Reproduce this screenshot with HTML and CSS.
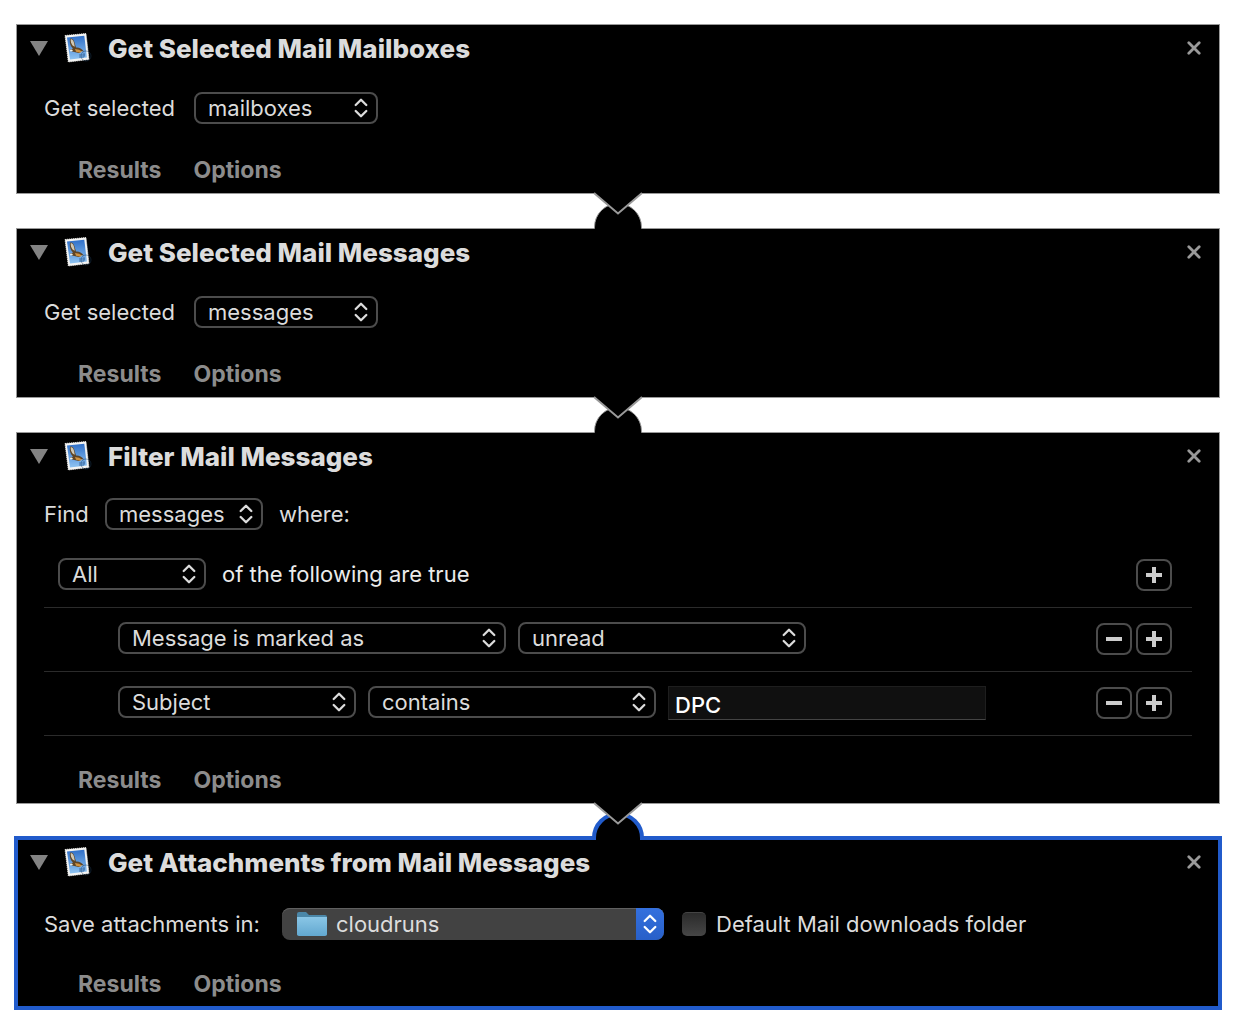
FILE: index.html
```html
<!DOCTYPE html>
<html lang="en">
<head>
<meta charset="utf-8">
<title>Mail workflow</title>
<link rel="stylesheet" href="styles.css">
</head>
<body>
<svg class="sprite" aria-hidden="true">
  <defs>
    <linearGradient id="sky" x1="0" y1="0" x2="0" y2="1">
      <stop offset="0" stop-color="#2f6fc8"/><stop offset="1" stop-color="#8fc4f2"/>
    </linearGradient>
    <linearGradient id="folder-front" x1="0" y1="0" x2="0" y2="1">
      <stop offset="0" stop-color="#8ac6e6"/><stop offset="1" stop-color="#62a8d0"/>
    </linearGradient>
  </defs>
  <symbol id="mail" viewBox="0 0 30 32">
    <path d="M2 3.500 23 1.500 26 27.500 5.300 30Z" fill="#f4f4f2" stroke="#f4f4f2" stroke-width=".8" stroke-dasharray="1.200 .8"/>
    <path d="M4 5.500 21.300 3.700 23.900 25.500 7 27.600Z" fill="url(#sky)"/>
    <path d="M7.300 6.500c2.200-.5 3.700 1.500 4.200 4l1.500 5c2.500-.5 5.500 1 8 4l-3-.6c-.5 2-2.500 2.600-4.500 1.600l-4.500-1-2-1.500 3-1.500C7.500 14 6 10 7.300 6.500Z" fill="#5f4526"/>
    <path d="M7.800 7c2 .2 2.700 2 3.200 3.800l.8 4-2-1C8.300 12 7.300 9.500 7.800 7Z" fill="#d0c8b4"/>
    <path d="M12 17l4 .8 3 1.700-2 1.200-4-.9Z" fill="#cf9240"/>
    <path d="M6.800 18l2.200-.5 1 1.500-2.500.6Z" fill="#f1eee4"/>
    <circle cx="23" cy="24" r="5" fill="none" stroke="#1d3b5c" stroke-width="1" opacity=".45"/>
    <path d="M16 23h6M16 25h5M21 21v4" stroke="#26558c" stroke-width="1" opacity=".7"/>
  </symbol>
  <symbol id="triangle" viewBox="0 0 18 15"><path d="M0 0H18L9 15Z" fill="#838383"/></symbol>
  <symbol id="cross" viewBox="0 0 14 14"><path d="M1.800 1.800 12.200 12.200M12.200 1.800 1.800 12.200" stroke="#999" stroke-width="2.800" stroke-linecap="round"/></symbol>
  <symbol id="chevrons" viewBox="0 0 14 20"><path d="M1.700 7 7 1.800 12.300 7M1.700 13 7 18.200 12.300 13" fill="none" stroke="currentColor" stroke-width="2.300" stroke-linecap="round" stroke-linejoin="round"/></symbol>
  <symbol id="plus" viewBox="0 0 16 16"><path d="M8 0V16M0 8H16" stroke="#ccc" stroke-width="4"/></symbol>
  <symbol id="minus" viewBox="0 0 16 16"><path d="M0 8H16" stroke="#ccc" stroke-width="4"/></symbol>
  <symbol id="folder" viewBox="0 0 32 26">
    <path d="M1 3Q1 1 3 1H10L13 4H29Q31 4 31 6V24H1Z" fill="#4b87a8"/>
    <path d="M1 6H31V23Q31 25 29 25H3Q1 25 1 23Z" fill="url(#folder-front)"/>
  </symbol>
  <symbol id="link" viewBox="0 0 60 40">
    <path d="M6.500 40V36A23.500 23.500 0 0 1 53.500 36V40Z"/>
    <path d="M6.500 37.500V36A23.500 23.500 0 0 1 53.500 36V37.500" fill="none" stroke="#999"/>
    <path d="M7 0V2.500L30 22.500 53 2.500V0Z"/>
    <path d="M6 2 30 22.500 54 2" fill="none" stroke="#999" stroke-width="2"/>
  </symbol>
  <symbol id="link-selected" viewBox="0 0 60 40">
    <path d="M6 40V37A24 24 0 0 1 54 37V40Z"/>
    <path d="M6 39V37A24 24 0 0 1 54 37V39" fill="none" stroke="#215bcb" stroke-width="4"/>
    <path d="M7 0V2.500L30 22.500 53 2.500V0Z"/>
    <path d="M6 2 30 22.500 54 2" fill="none" stroke="#999" stroke-width="2"/>
  </symbol>
</svg>
<main class="workflow">
  <section class="action">
    <header class="action-header">
      <button class="icon-button" aria-label="Collapse"><svg class="disclosure"><use href="#triangle"/></svg></button>
      <svg class="mail-icon"><use href="#mail"/></svg>
      <h2 class="title">Get Selected Mail Mailboxes</h2>
      <button class="icon-button close" aria-label="Remove"><svg class="cross"><use href="#cross"/></svg></button>
    </header>
    <div class="action-body">
      <div class="row">
        <label class="label-selected" for="kind1">Get selected</label>
        <span class="popup popup-kind"><select id="kind1"><option>mailboxes</option></select><svg class="chevrons"><use href="#chevrons"/></svg></span>
      </div>
    </div>
    <footer class="action-footer"><button class="tab">Results</button><button class="tab">Options</button></footer>
  </section>

  <svg class="link"><use href="#link"/></svg>

  <section class="action">
    <header class="action-header">
      <button class="icon-button" aria-label="Collapse"><svg class="disclosure"><use href="#triangle"/></svg></button>
      <svg class="mail-icon"><use href="#mail"/></svg>
      <h2 class="title">Get Selected Mail Messages</h2>
      <button class="icon-button close" aria-label="Remove"><svg class="cross"><use href="#cross"/></svg></button>
    </header>
    <div class="action-body">
      <div class="row">
        <label class="label-selected" for="kind2">Get selected</label>
        <span class="popup popup-kind"><select id="kind2"><option>messages</option></select><svg class="chevrons"><use href="#chevrons"/></svg></span>
      </div>
    </div>
    <footer class="action-footer"><button class="tab">Results</button><button class="tab">Options</button></footer>
  </section>

  <svg class="link"><use href="#link"/></svg>

  <section class="action">
    <header class="action-header">
      <button class="icon-button" aria-label="Collapse"><svg class="disclosure"><use href="#triangle"/></svg></button>
      <svg class="mail-icon"><use href="#mail"/></svg>
      <h2 class="title">Filter Mail Messages</h2>
      <button class="icon-button close" aria-label="Remove"><svg class="cross"><use href="#cross"/></svg></button>
    </header>
    <div class="action-body filter-body">
      <div class="row">
        <label class="label-find" for="find">Find</label>
        <span class="popup popup-find"><select id="find"><option>messages</option></select><svg class="chevrons"><use href="#chevrons"/></svg></span>
        <span>where:</span>
      </div>
      <div class="rules">
        <div class="rule rule-match">
          <span class="popup popup-match"><select id="match"><option>All</option></select><svg class="chevrons"><use href="#chevrons"/></svg></span>
          <label class="match-label" for="match">of the following are true</label>
          <div class="rule-buttons"><button class="square" aria-label="Add"><svg><use href="#plus"/></svg></button></div>
        </div>
        <div class="rule">
          <span class="popup popup-marked"><select aria-label="Field"><option>Message is marked as</option></select><svg class="chevrons"><use href="#chevrons"/></svg></span>
          <span class="popup popup-test"><select aria-label="Value"><option>unread</option></select><svg class="chevrons"><use href="#chevrons"/></svg></span>
          <div class="rule-buttons"><button class="square" aria-label="Delete"><svg><use href="#minus"/></svg></button><button class="square" aria-label="Add"><svg><use href="#plus"/></svg></button></div>
        </div>
        <div class="rule">
          <span class="popup popup-subject"><select aria-label="Field"><option>Subject</option></select><svg class="chevrons"><use href="#chevrons"/></svg></span>
          <span class="popup popup-test"><select aria-label="Test"><option>contains</option></select><svg class="chevrons"><use href="#chevrons"/></svg></span>
          <input class="text-field" type="text" value="DPC" aria-label="Text">
          <div class="rule-buttons"><button class="square" aria-label="Delete"><svg><use href="#minus"/></svg></button><button class="square" aria-label="Add"><svg><use href="#plus"/></svg></button></div>
        </div>
      </div>
    </div>
    <footer class="action-footer"><button class="tab">Results</button><button class="tab">Options</button></footer>
  </section>

  <svg class="link"><use href="#link-selected"/></svg>

  <section class="action selected">
    <header class="action-header">
      <button class="icon-button" aria-label="Collapse"><svg class="disclosure"><use href="#triangle"/></svg></button>
      <svg class="mail-icon"><use href="#mail"/></svg>
      <h2 class="title">Get Attachments from Mail Messages</h2>
      <button class="icon-button close" aria-label="Remove"><svg class="cross"><use href="#cross"/></svg></button>
    </header>
    <div class="action-body">
      <div class="row">
        <label class="label-save" for="folder-select">Save attachments in:</label>
        <span class="popup popup-folder"><svg class="folder"><use href="#folder"/></svg><select id="folder-select"><option>cloudruns</option></select><span class="popup-cap"><svg><use href="#chevrons"/></svg></span></span>
        <label class="check"><input type="checkbox">Default Mail downloads folder</label>
      </div>
    </div>
    <footer class="action-footer"><button class="tab">Results</button><button class="tab">Options</button></footer>
  </section>
</main>
</body>
</html>
```
FILE: styles.css
```css
* { box-sizing: border-box; }

body {
  margin: 0;
  background: #fff;
  color: #dcdcdc;
  font: 22px/32px Inter, "Liberation Sans", sans-serif;
}

button, select, input { font: inherit; color: inherit; margin: 0; }
button { background: none; border: 0; padding: 0; }

.sprite { position: absolute; width: 0; height: 0; }

.workflow { padding: 24px 16px; }

.action { background: #000; box-shadow: inset 0 0 0 1px #999; }
.action.selected { box-shadow: inset 0 0 0 2px #215bcb, 0 0 0 2px #215bcb; }

.link {
  display: block;
  position: relative;
  width: 60px;
  height: 40px;
  margin: -3px auto;
}

.action-header {
  display: flex;
  align-items: center;
  height: 48px;
  padding: 0 19px 0 14px;
}
.icon-button { display: flex; }
.close { margin-left: auto; }
.disclosure { width: 18px; height: 15px; }
.cross { width: 14px; height: 14px; }
.mail-icon { width: 30px; height: 32px; margin: 0 15px; }
.title { margin: 0; padding-top: 2px; font-size: 26px; line-height: 32px; font-weight: 800; }

.action-body { padding: 20px 28px 22px; }
.selected .action-body { padding: 22px 28px 20px; }
.filter-body { padding: 18px 28px 20px; }

.row { display: flex; align-items: center; gap: 16px; }
.label-selected { width: 134px; }
.label-find { width: 45px; }
.label-save { width: 222px; }

.action-footer {
  display: flex;
  align-items: center;
  gap: 32px;
  height: 48px;
  padding: 0 62px;
}
.tab { color: #8c8c8c; font-size: 23px; font-weight: 700; }

.popup { position: relative; display: block; height: 32px; flex: none; }
.popup select {
  appearance: none;
  display: block;
  width: 100%;
  height: 32px;
  padding: 0 32px 0 12px;
  border: 2px solid #4c4c4c;
  border-radius: 8px;
  background: transparent;
  line-height: 28px;
}
.chevrons { position: absolute; right: 10px; top: 6px; width: 14px; height: 20px; pointer-events: none; }
.popup-kind { width: 184px; }
.popup-find { width: 158px; }
.popup-match { width: 148px; }
.popup-marked { width: 388px; }
.popup-test { width: 288px; }
.popup-subject { width: 238px; }

.popup-folder { width: 382px; margin-right: 2px; }
.popup-folder select {
  padding-left: 54px;
  border: 0;
  background: #424242;
  box-shadow: inset 0 1px 0 #606060;
}
.folder { position: absolute; left: 14px; top: 3px; width: 32px; height: 26px; }
.popup-cap {
  position: absolute;
  right: 0;
  top: 0;
  display: flex;
  align-items: center;
  justify-content: center;
  width: 28px;
  height: 32px;
  border-radius: 0 8px 8px 0;
  background: linear-gradient(#3470de, #2860c8);
  color: #fff;
  pointer-events: none;
}
.popup-cap svg { width: 14px; height: 20px; }

.rules { margin-top: 14px; }
.rule {
  display: flex;
  align-items: flex-start;
  gap: 12px;
  height: 64px;
  padding: 14px 20px 0 74px;
  border-bottom: 1px solid #2b2b2b;
}
.rule-match { padding-left: 14px; gap: 16px; }
.match-label { color: #ebebeb; }
.rule-buttons { display: flex; gap: 4px; margin-left: auto; padding-top: 1px; }
.square {
  display: flex;
  align-items: center;
  justify-content: center;
  width: 36px;
  height: 32px;
  border: 2px solid #4c4c4c;
  border-radius: 8px;
}
.square svg { width: 16px; height: 16px; }

.text-field {
  width: 318px;
  height: 34px;
  padding: 4px 6px 0;
  border: 1px solid #1e1e1e;
  border-bottom-color: #444;
  border-radius: 0;
  background: #101010;
  color: #fff;
  font-weight: 500;
}

.check { display: flex; align-items: center; gap: 10px; }
.check input {
  appearance: none;
  width: 24px;
  height: 24px;
  border-radius: 5px;
  border-top: 1px solid #444;
  background: linear-gradient(#2b2b2b, #464646);
}
```
